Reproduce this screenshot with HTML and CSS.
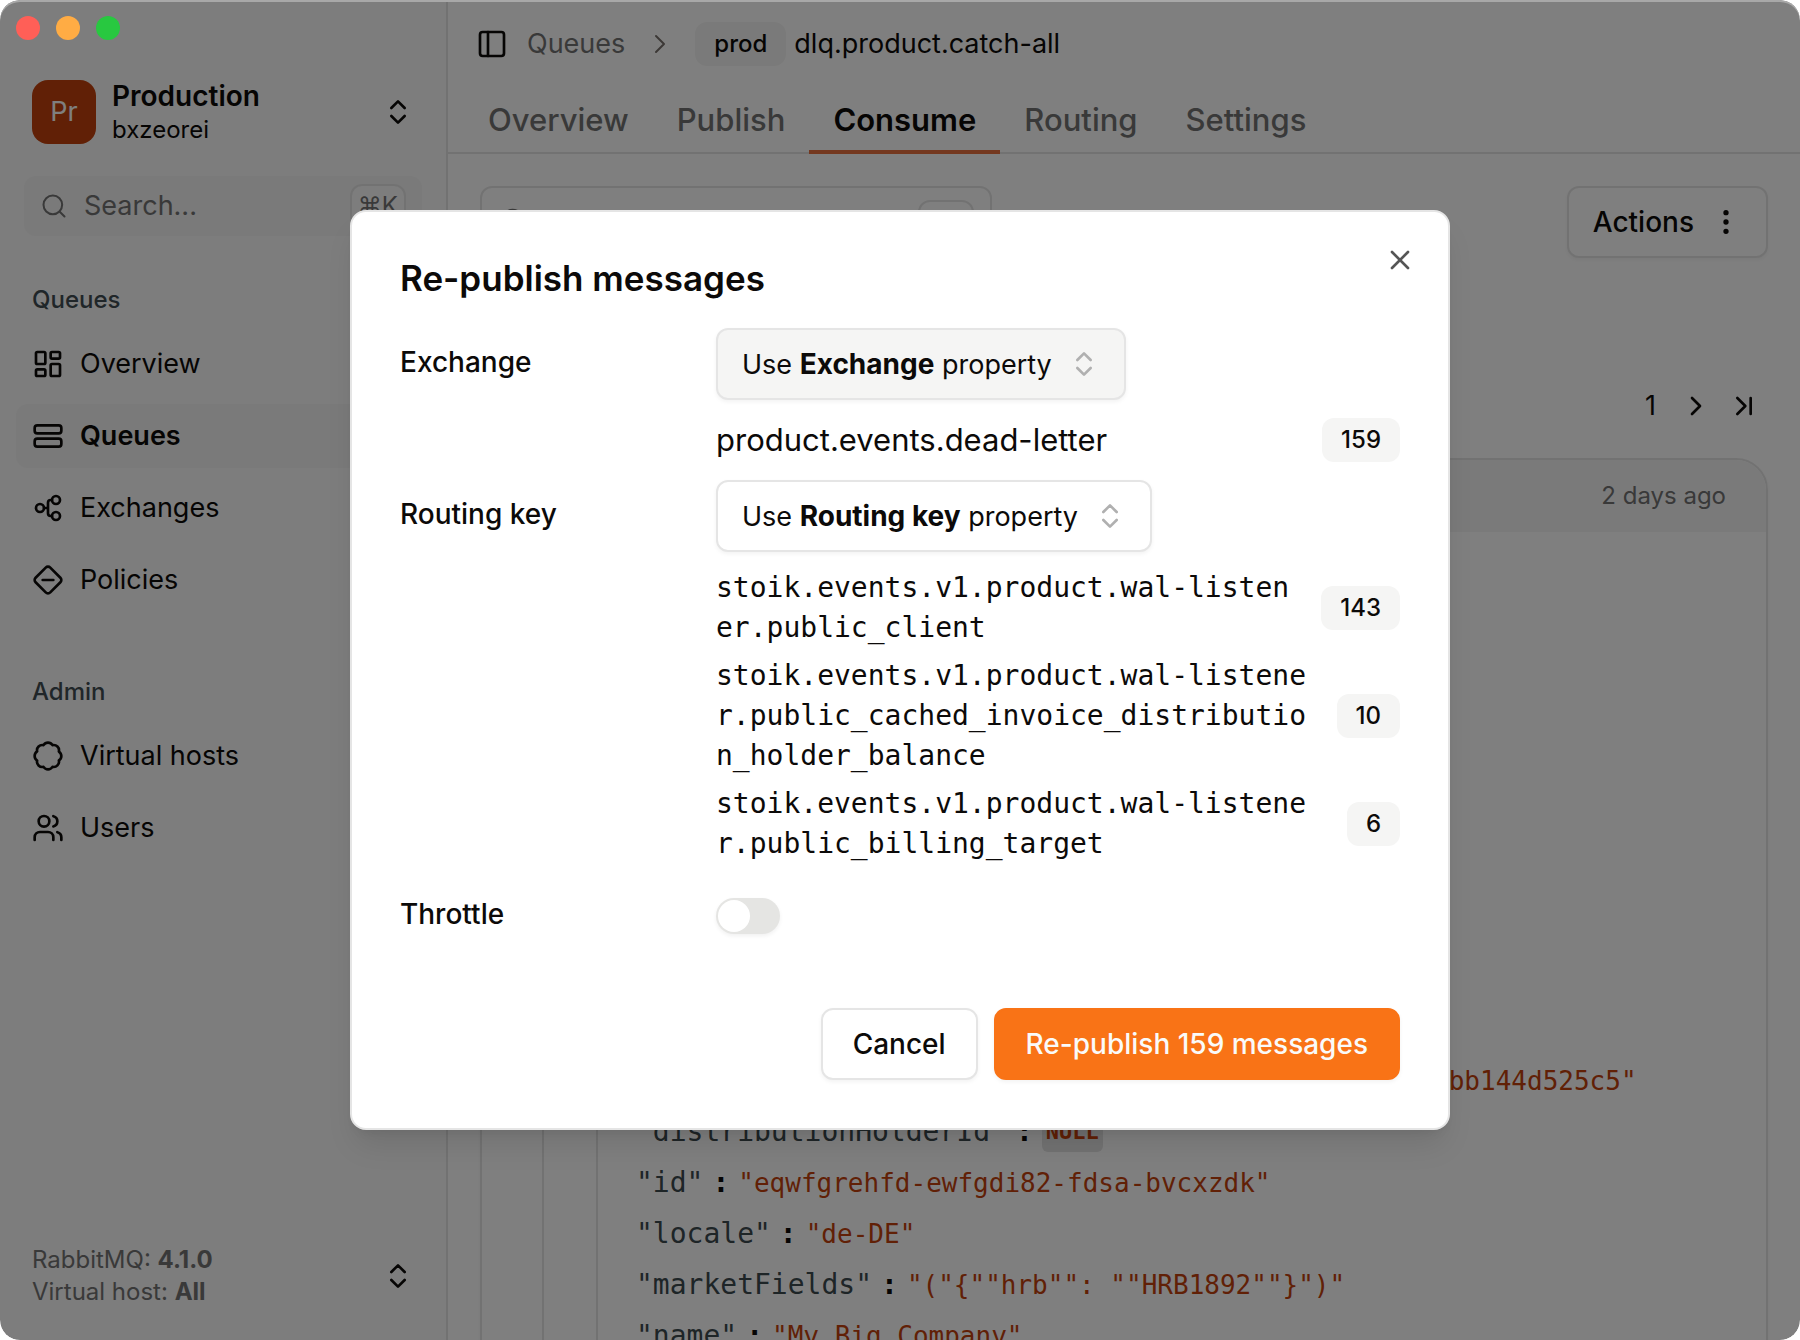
FILE: index.html
```html
<!DOCTYPE html>
<html lang="en">
<head>
<meta charset="utf-8">
<meta name="viewport" content="width=device-width, initial-scale=1">
<title>dlq.product.catch-all</title>
<link rel="stylesheet" href="styles.css">
</head>
<body>
<svg class="sprite" aria-hidden="true">
  <symbol id="updown" viewBox="0 0 24 24"><path d="m7 15 5 5 5-5M7 9l5-5 5 5"/></symbol>
  <symbol id="search" viewBox="0 0 24 24"><circle cx="11" cy="11" r="8"/><path d="m21 21-4.3-4.3"/></symbol>
  <symbol id="right" viewBox="0 0 24 24"><path d="m9 18 6-6-6-6"/></symbol>
</svg>
<div class="window">
  <aside class="sidebar">
    <button class="connection" type="button">
      <span class="avatar">Pr</span>
      <span class="connection-text"><strong>Production</strong><span>bxzeorei</span></span>
      <svg class="icon"><use href="#updown"/></svg>
    </button>
    <label class="side-search">
      <svg class="icon small"><use href="#search"/></svg>
      <input type="search" placeholder="Search..." aria-label="Search">
      <kbd>⌘K</kbd>
    </label>
    <nav class="group" aria-label="Queues">
      <h2>Queues</h2>
      <a class="item" href="#overview"><svg class="icon" viewBox="0 0 24 24"><rect x="3" y="3" width="7" height="9" rx="1"/><rect x="14" y="3" width="7" height="5" rx="1"/><rect x="14" y="12" width="7" height="9" rx="1"/><rect x="3" y="16" width="7" height="5" rx="1"/></svg>Overview</a>
      <a class="item active" href="#queues"><svg class="icon" viewBox="0 0 24 24"><rect x="2" y="4" width="20" height="6" rx="2"/><rect x="2" y="14" width="20" height="6" rx="2"/></svg>Queues</a>
      <a class="item" href="#exchanges"><svg class="icon" viewBox="0 0 24 24"><circle cx="6" cy="12" r="3"/><circle cx="18" cy="6" r="3"/><circle cx="18" cy="18" r="3"/><path d="M9 12h3M15 6h-1a2 2 0 0 0-2 2v8a2 2 0 0 0 2 2h1"/></svg>Exchanges</a>
      <a class="item" href="#policies"><svg class="icon" viewBox="0 0 24 24"><path d="M2.7 10.3a2.41 2.41 0 0 0 0 3.41l7.59 7.59a2.41 2.41 0 0 0 3.41 0l7.59-7.59a2.41 2.41 0 0 0 0-3.41L13.7 2.71a2.41 2.41 0 0 0-3.41 0zM8 12h8"/></svg>Policies</a>
    </nav>
    <nav class="group" aria-label="Admin">
      <h2>Admin</h2>
      <a class="item" href="#vhosts"><svg class="icon" viewBox="0 0 24 24"><path d="M3.85 8.62a4 4 0 0 1 4.78-4.77 4 4 0 0 1 6.74 0 4 4 0 0 1 4.78 4.78 4 4 0 0 1 0 6.74 4 4 0 0 1-4.77 4.78 4 4 0 0 1-6.75 0 4 4 0 0 1-4.78-4.77 4 4 0 0 1 0-6.76Z"/></svg>Virtual hosts</a>
      <a class="item" href="#users"><svg class="icon" viewBox="0 0 24 24"><path d="M16 21v-2a4 4 0 0 0-4-4H6a4 4 0 0 0-4 4v2"/><circle cx="9" cy="7" r="4"/><path d="M22 21v-2a4 4 0 0 0-3-3.87M16 3.13a4 4 0 0 1 0 7.75"/></svg>Users</a>
    </nav>
    <button class="server" type="button">
      <span class="server-text"><span>RabbitMQ: <b>4.1.0</b></span><span>Virtual host: <b>All</b></span></span>
      <svg class="icon"><use href="#updown"/></svg>
    </button>
  </aside>

  <main class="main">
    <header class="crumbs">
      <button class="icon-button" type="button" aria-label="Toggle sidebar"><svg class="icon" viewBox="0 0 24 24"><rect x="3" y="3" width="18" height="18" rx="2"/><path d="M9 3v18"/></svg></button>
      <a class="crumb" href="#queues">Queues</a>
      <svg class="icon muted"><use href="#right"/></svg>
      <span class="crumb-name"><span class="badge">prod</span>dlq.product.catch-all</span>
    </header>
    <nav class="tabs" aria-label="Queue">
      <a href="#overview">Overview</a>
      <a href="#publish">Publish</a>
      <a class="current" href="#consume">Consume</a>
      <a href="#routing">Routing</a>
      <a href="#settings">Settings</a>
    </nav>
    <div class="content">
      <div class="toolbar">
        <label class="filter">
          <svg class="icon"><use href="#search"/></svg>
          <input type="search" aria-label="Filter messages">
          <kbd></kbd>
        </label>
        <button class="button" type="button">Actions <svg class="icon solid" viewBox="0 0 24 24"><circle cx="12" cy="5" r="1"/><circle cx="12" cy="12" r="1"/><circle cx="12" cy="19" r="1"/></svg></button>
      </div>
      <div class="pager">
        <span>1</span>
        <button class="icon-button" type="button" aria-label="Next page"><svg class="icon"><use href="#right"/></svg></button>
        <button class="icon-button" type="button" aria-label="Last page"><svg class="icon" viewBox="0 0 24 24"><path d="m7 18 6-6-6-6M17 6v12"/></svg></button>
      </div>
      <article class="message">
        <header><time>2 days ago</time></header>
        <div class="tree">
          <div class="branch">
            <div class="leaf"><span class="key">"distributionClientId"</span><i>:</i><span class="value">"3f0c9a52-7d1e-4b86-a2f4-0bb144d525c5"</span></div>
            <div class="leaf"><span class="key">"distributionHolderId"</span><i>:</i><span class="null">NULL</span></div>
            <div class="leaf"><span class="key">"id"</span><i>:</i><span class="value">"eqwfgrehfd-ewfgdi82-fdsa-bvcxzdk"</span></div>
            <div class="leaf"><span class="key">"locale"</span><i>:</i><span class="value">"de-DE"</span></div>
            <div class="leaf"><span class="key">"marketFields"</span><i>:</i><span class="value">"("{""hrb"": ""HRB1892""}")"</span></div>
            <div class="leaf"><span class="key">"name"</span><i>:</i><span class="value">"My Big Company"</span></div>
          </div>
        </div>
      </article>
    </div>
  </main>

  <div class="overlay">
    <section class="dialog" role="dialog" aria-modal="true" aria-labelledby="dialog-title">
      <h1 id="dialog-title">Re-publish messages</h1>
      <button class="icon-button close" type="button" aria-label="Close"><svg class="icon" viewBox="0 0 24 24"><path d="M18 6 6 18M6 6l12 12"/></svg></button>
      <div class="field">
        <label for="exchange">Exchange</label>
        <div class="control">
          <button class="button select filled" id="exchange" type="button" aria-haspopup="listbox"><span>Use <b>Exchange</b> property</span><svg class="icon"><use href="#updown"/></svg></button>
          <div class="count"><span class="plain">product.events.dead-letter</span><span class="badge">159</span></div>
        </div>
      </div>
      <div class="field">
        <label for="routing">Routing key</label>
        <div class="control">
          <button class="button select" id="routing" type="button" aria-haspopup="listbox"><span>Use <b>Routing key</b> property</span><svg class="icon"><use href="#updown"/></svg></button>
          <div class="counts">
            <div class="count"><code>stoik.events.v1.product.wal-listener.public_client</code><span class="badge">143</span></div>
            <div class="count"><code>stoik.events.v1.product.wal-listener.public_cached_invoice_distribution_holder_balance</code><span class="badge">10</span></div>
            <div class="count"><code>stoik.events.v1.product.wal-listener.public_billing_target</code><span class="badge">6</span></div>
          </div>
        </div>
      </div>
      <div class="field throttle">
        <label for="throttle">Throttle</label>
        <input class="switch" id="throttle" type="checkbox" role="switch">
      </div>
      <footer class="actions">
        <button class="button" type="button">Cancel</button>
        <button class="button primary" type="button">Re-publish 159 messages</button>
      </footer>
    </section>
  </div>

  <div class="lights"><span class="red"></span><span class="amber"></span><span class="green"></span></div>
</div>
</body>
</html>
```

FILE: styles.css
```css
* { box-sizing: border-box; }

body {
  margin: 0;
  background: #fff;
  color: #0c0a09;
  font: 400 27px/40px Inter, "Liberation Sans", sans-serif;
}

button, input { font: inherit; color: inherit; }
button { border: 0; background: none; padding: 0; text-align: left; cursor: pointer; }
a { color: inherit; text-decoration: none; }
h1, h2 { margin: 0; }

.sprite { display: none; }

.icon {
  flex: none;
  width: 32px;
  height: 32px;
  fill: none;
  stroke: currentColor;
  stroke-width: 2;
  stroke-linecap: round;
  stroke-linejoin: round;
}
.icon.small { width: 28px; height: 28px; stroke-width: 1.75; }
.icon.muted { color: #78716c; stroke-width: 1.5; }
.icon.solid { fill: currentColor; }
.icon-button { display: flex; }

.window {
  position: relative;
  display: flex;
  height: 100vh;
  overflow: hidden;
  border-radius: 20px;
}

.lights { position: absolute; top: 16px; left: 16px; display: flex; gap: 16px; }
.lights span { width: 24px; height: 24px; border-radius: 50%; }
.red { background: #ff5f57; }
.amber { background: #ffac44; }
.green { background: #28c840; }

/* Sidebar */
.sidebar {
  flex: none;
  display: flex;
  flex-direction: column;
  width: 448px;
  padding: 80px 16px 32px;
  background: #fafafa;
  border-right: 2px solid #e5e5e5;
}
.connection, .server { display: flex; align-items: center; padding: 0 16px; }
.connection { height: 64px; }
.avatar {
  width: 64px;
  height: 64px;
  border-radius: 16px;
  background: #c2410c;
  color: #fff;
  line-height: 64px;
  text-align: center;
}
.connection-text, .server-text { display: flex; flex-direction: column; flex: 1; font-size: 24px; line-height: 32px; }
.connection-text { margin-left: 16px; }
.connection-text strong { font-size: 28px; font-weight: 600; line-height: 36px; }

.side-search {
  display: flex;
  align-items: center;
  gap: 16px;
  height: 60px;
  margin: 32px 8px;
  padding: 0 16px;
  border-radius: 12px;
  background: #f4f4f4;
  color: #737373;
}
.side-search input, .filter input { flex: 1; min-width: 0; padding: 0; border: 0; outline: 0; background: none; }
.side-search input::placeholder { color: #737373; opacity: 1; }
kbd {
  min-width: 56px;
  height: 44px;
  padding: 0 6px;
  border: 2px solid #e5e5e5;
  border-radius: 12px;
  background: #fafafa;
  font: 400 24px/40px Inter, "DejaVu Sans", sans-serif;
  text-align: center;
}

.group { display: flex; flex-direction: column; gap: 8px; }
.group + .group { margin-top: 48px; }
.group h2 {
  height: 64px;
  margin-bottom: -8px;
  padding: 0 16px;
  color: #414d52;
  font-size: 24px;
  font-weight: 500;
  line-height: 64px;
}
.item { display: flex; align-items: center; gap: 16px; height: 64px; padding: 0 16px; border-radius: 12px; }
.item.active { background: #f4f4f4; font-weight: 600; }

.server { margin-top: auto; color: #737373; }
.server .icon { color: #0c0a09; }
.server b { font-weight: 700; }

/* Queue page */
.main { flex: 1; min-width: 0; background: #fff; }
.crumbs { display: flex; align-items: center; gap: 19px; height: 88px; padding: 0 28px; }
.crumb { color: #737373; }
.crumb-name { display: flex; align-items: center; gap: 8px; }
.badge {
  flex: none;
  padding: 0 19px;
  border-radius: 12px;
  background: #f5f5f4;
  font-size: 24px;
  font-weight: 500;
  line-height: 44px;
}

.tabs { display: flex; padding: 0 16px; box-shadow: inset 0 -2px #e5e5e5; }
.tabs a {
  height: 66px;
  padding: 12px 24px 0;
  border-bottom: 4px solid transparent;
  color: #737373;
  font-size: 31px;
  font-weight: 500;
}
.tabs .current { border-color: #e8703e; color: #0c0a09; font-weight: 600; }

.content { padding: 32px; }
.toolbar { display: flex; justify-content: space-between; }
.filter {
  display: flex;
  align-items: center;
  gap: 16px;
  width: 512px;
  height: 72px;
  padding: 0 16px;
  border: 2px solid #e5e5e5;
  border-radius: 12px;
}
.filter .icon { color: #737373; }
.filter kbd { background: #fff; }

.button {
  display: flex;
  align-items: center;
  justify-content: center;
  gap: 16px;
  height: 72px;
  padding: 0 24px;
  border: 2px solid #e5e5e5;
  border-radius: 12px;
  background: #fff;
  box-shadow: 0 2px 4px rgba(0, 0, 0, 0.05);
  font-size: 28px;
  font-weight: 500;
}

.pager { display: flex; align-items: center; justify-content: flex-end; gap: 16px; margin-top: 128px; padding-right: 8px; }
.pager span { margin-right: 8px; }

.message {
  margin-top: 32px;
  border: 2px solid #e5e5e5;
  border-radius: 32px;
  overflow: hidden;
  box-shadow: 0 2px 4px rgba(0, 0, 0, 0.05);
}
.message header {
  padding: 16px 40px;
  background: #f5f5f5;
  color: #737373;
  font-size: 24px;
  text-align: right;
}
.tree { margin-left: 60px; padding-left: 52px; border-left: 2px solid #e5e5e5; }
.branch { padding: 523px 0 16px 38px; border-left: 2px solid #e5e5e5; }
.leaf {
  display: flex;
  align-items: center;
  height: 51px;
  font-family: "DejaVu Sans Mono", monospace;
  font-size: 28px;
  white-space: pre;
}
.leaf i { margin: 0 9px; font-style: normal; font-weight: 700; }
.key { color: #3d4a4f; }
.value { color: #c2410c; font-size: 26px; }
.null {
  padding: 0 4px;
  border-radius: 6px;
  background: #e5e5e5;
  color: #c2410c;
  font-size: 22px;
  font-weight: 700;
}

/* Dialog */
.overlay {
  position: absolute;
  inset: 0;
  display: flex;
  align-items: center;
  justify-content: center;
  border-radius: 20px;
  background: rgba(0, 0, 0, 0.5);
  box-shadow: inset 0 2px #a8a8a8;
}
.dialog {
  position: relative;
  display: flex;
  flex-direction: column;
  gap: 16px;
  width: 1100px;
  padding: 48px;
  border: 2px solid #e5e5e5;
  border-radius: 16px;
  background: #fff;
  box-shadow: 0 20px 30px -6px rgba(0, 0, 0, 0.1), 0 8px 12px -8px rgba(0, 0, 0, 0.1);
}
.dialog h1 { margin-bottom: 16px; font-size: 35px; font-weight: 600; line-height: 36px; }
.close { position: absolute; top: 32px; right: 32px; color: #555; }

.field { display: grid; grid-template-columns: 300px 1fr; column-gap: 16px; align-items: start; }
.field label { padding-top: 14px; font-size: 28px; font-weight: 500; }
.control { display: flex; flex-direction: column; align-items: flex-start; gap: 16px; }
.select { font-size: 27px; font-weight: 400; }
.select b { font-size: 28px; font-weight: 700; }
.select .icon { color: #b0b0b0; }
.filled { background: #f5f5f4; }
.counts { display: flex; flex-direction: column; gap: 8px; width: 100%; }
.count { display: flex; align-items: center; justify-content: space-between; gap: 20px; width: 100%; }
.plain { font-size: 31px; line-height: 48px; }
code { max-width: 600px; font: 400 28px/40px "DejaVu Sans Mono", monospace; word-break: break-all; }

.throttle { height: 72px; }
.switch {
  appearance: none;
  width: 64px;
  height: 36px;
  margin: 18px 0;
  padding: 2px;
  border-radius: 18px;
  background: #e5e5e3;
  box-shadow: 0 2px 4px rgba(0, 0, 0, 0.06);
}
.switch::before { content: ""; display: block; width: 32px; height: 32px; border-radius: 50%; background: #fff; }

.actions { display: flex; justify-content: flex-end; gap: 16px; margin-top: 40px; }
.actions .button { padding: 0 30px; }
.actions .primary { border-color: #f97316; background: #f97316; color: #fafaf9; }
```
